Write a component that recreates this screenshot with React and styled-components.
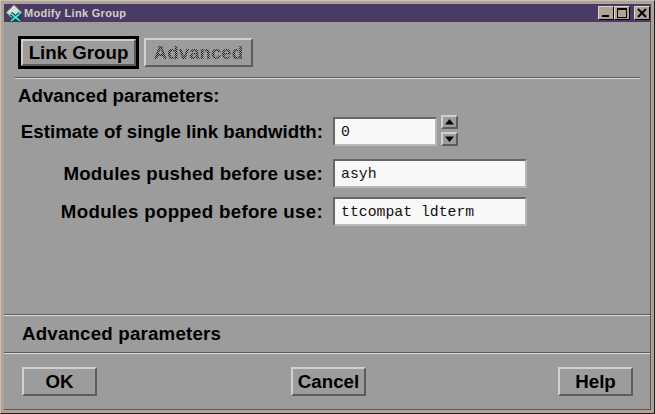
import React from "react";
import styled, { createGlobalStyle } from "styled-components";

const Global = createGlobalStyle`
  html, body { margin: 0; padding: 0; background: #9c9c9c; }
  #root { width: 655px; height: 414px; }
`;

const Frame = styled.div`
  box-sizing: border-box;
  width: 655px;
  height: 414px;
  display: flex;
  flex-direction: column;
  background: #9c9c9c;
  border-style: solid;
  border-width: 1px;
  border-color: #c8c0b8 #201c1c #201c1c #c8c0b8;
  font-family: "Liberation Sans", Arial, sans-serif;
  color: #000;
`;

const Inner = styled.div`
  flex: 1;
  min-height: 0;
  display: flex;
  flex-direction: column;
  border-style: solid;
  border-width: 3px;
  border-color: #b0a296;
`;

const TitleBar = styled.div`
  height: 18px;
  display: flex;
  align-items: center;
  background: #483c64;
  color: #d8d0c8;
  font-size: 11px;
  font-weight: 700;
  letter-spacing: 0.3px;
  padding: 0 1px 0 1px;
  gap: 1px;
`;

const TitleText = styled.span`
  flex: 1;
`;

const WinButton = styled.button`
  box-sizing: border-box;
  width: 16px;
  height: 14px;
  padding: 0;
  background: #b0a296;
  border-style: solid;
  border-width: 1px;
  border-color: #e0d8d0 #000 #000 #e0d8d0;
  display: flex;
  align-items: center;
  justify-content: center;
`;

const WinGroup = styled.div`
  display: flex;
  margin-right: ${p => p.$gap || 0}px;
`;

const Client = styled.div`
  flex: 1;
  min-height: 0;
  display: flex;
  flex-direction: column;
  border-right: 1px solid #5c5650;
  border-bottom: 1px solid #5c5650;
`;

const Tabs = styled.div`
  display: flex;
  align-items: center;
  gap: 5px;
  padding: 14px 0 0 14px;
  height: 33px;
`;

const Default = styled.div`
  border: 3px solid #000;
  display: flex;
`;

const Push = styled.button`
  box-sizing: border-box;
  background: #9c9c9c;
  border-style: solid;
  border-width: 2px;
  border-color: #d0d0d0 #5c5c5c #5c5c5c #d0d0d0;
  font-family: "Liberation Sans", Arial, sans-serif;
  font-weight: 700;
  font-size: 18.7px;
  color: #000;
  padding: 0;
  width: ${p => p.$w}px;
  height: ${p => p.$h}px;
  margin: 0;
`;

const Dim = styled.span`
  color: transparent;
  background-image: repeating-conic-gradient(#1c1c1c 0 25%, #9c9c9c 0 50%);
  background-size: 2px 2px;
  -webkit-background-clip: text;
  background-clip: text;
`;

const Rule = styled.div`
  height: 2px;
  margin: ${p => p.$m || "0"};
  background: linear-gradient(#5c5c5c 50%, #dcdcdc 50%);
`;

const Heading = styled.div`
  font-size: 18.7px;
  font-weight: 700;
  line-height: 18px;
  padding: 8px 0 0 14px;
`;

const Form = styled.div`
  flex: 1;
  min-height: 0;
  display: grid;
  grid-template-columns: 319px auto;
  grid-template-rows: 33px 29px 29px;
  row-gap: 9px;
  column-gap: 10px;
  align-items: start;
  justify-items: start;
  padding-top: 12px;
  align-content: start;
`;

const Label = styled.label`
  justify-self: end;
  font-size: 18.7px;
  font-weight: 700;
  line-height: 29px;
  letter-spacing: ${p => p.$track || 0}px;
  white-space: nowrap;
`;

const Field = styled.div`
  display: flex;
  align-items: center;
  gap: 4px;
`;

const Input = styled.input`
  box-sizing: border-box;
  width: ${p => p.$w}px;
  height: 29px;
  background: #f8f8f8;
  border-style: solid;
  border-width: 2px;
  border-color: #666 #b8b8b8 #b8b8b8 #666;
  outline: none;
  padding: 0 0 0 6px;
  font-family: "Liberation Mono", "DejaVu Sans Mono", monospace;
  font-size: 14.8px;
  color: #111;
`;

const Spin = styled.div`
  display: flex;
  flex-direction: column;
  gap: 3px;
  margin-top: -2px;
`;

const Arrow = styled.button`
  box-sizing: border-box;
  width: 17px;
  height: 14px;
  padding: 0;
  background: #9c9c9c;
  border-style: solid;
  border-width: 2px;
  border-color: #d0d0d0 #5c5c5c #5c5c5c #d0d0d0;
  display: flex;
  align-items: center;
  justify-content: center;
`;

const Status = styled.div`
  height: 36px;
  display: flex;
  align-items: center;
  padding-left: 18px;
  font-size: 18.7px;
  letter-spacing: 0.2px;
  font-weight: 700;
`;

const Actions = styled.div`
  display: grid;
  grid-template-columns: 269px 267px 75px;
  padding: 13px 0 0 18px;
  flex: 0 0 55px;
  box-sizing: border-box;
`;

const XLogo = styled.svg`
  flex: none;
  overflow: visible;
`;

export default function App() {
  return (
    <>
      <Global />
      <Frame>
        <Inner>
          <TitleBar>
            <XLogo width="18" height="18" viewBox="0 0 18 18">
              <path d="M9 0.5L17 8.5L9 16.5L1 8.5Z" fill="#d4d4d4" stroke="#555" strokeWidth="1" />
              <path d="M4 8L9 3M7 9L12 5M10 10L14 8" stroke="#f4f4f4" strokeWidth="1" fill="none" />
              <path d="M6 9.5L15 17M15 9.5L6 17" stroke="#102828" strokeWidth="3.6" fill="none" />
              <path d="M6 9.5L15 17M15 9.5L6 17" stroke="#30e8e8" strokeWidth="2" fill="none" />
            </XLogo>
            <TitleText>Modify Link Group</TitleText>
            <WinGroup $gap={3}>
              <WinButton aria-label="Minimize">
                <svg width="12" height="12" viewBox="0 0 12 12"><rect x="2" y="8" width="7" height="2" fill="#000" /></svg>
              </WinButton>
              <WinButton aria-label="Maximize">
                <svg width="12" height="12" viewBox="0 0 12 12"><rect x="1.5" y="1.5" width="9" height="9" fill="none" stroke="#000" /><rect x="1" y="1" width="10" height="2" fill="#000" /></svg>
              </WinButton>
            </WinGroup>
            <WinGroup>
              <WinButton aria-label="Close">
                <svg width="12" height="12" viewBox="0 0 12 12"><path d="M2 2L10 10M10 2L2 10" stroke="#000" strokeWidth="2" /></svg>
              </WinButton>
            </WinGroup>
          </TitleBar>
          <Client>
            <Tabs>
              <Default><Push $w={115} $h={27}>Link Group</Push></Default>
              <Push $w={109} $h={29}><Dim>Advanced</Dim></Push>
            </Tabs>
            <Rule $m="8px 10px 0 11px" />
            <Heading>Advanced parameters:</Heading>
            <Form>
              <Label>Estimate of single link bandwidth:</Label>
              <Field>
                <Input $w={104} defaultValue="0" />
                <Spin>
                  <Arrow aria-label="Up">
                    <svg width="9" height="6" viewBox="0 0 9 6"><path d="M4.5 0L9 5.5H0Z" fill="#000" /></svg>
                  </Arrow>
                  <Arrow aria-label="Down">
                    <svg width="9" height="6" viewBox="0 0 9 6"><path d="M0 .5H9L4.5 6Z" fill="#000" /></svg>
                  </Arrow>
                </Spin>
              </Field>
              <Label $track={0.24}>Modules pushed before use:</Label>
              <Input $w={194} defaultValue="asyh" />
              <Label $track={0.3}>Modules popped before use:</Label>
              <Input $w={194} defaultValue="ttcompat ldterm" />
            </Form>
            <Rule />
            <Status>Advanced parameters</Status>
            <Rule />
            <Actions>
              <Push $w={75} $h={29}>OK</Push>
              <Push $w={75} $h={29}>Cancel</Push>
              <Push $w={75} $h={29}>Help</Push>
            </Actions>
          </Client>
        </Inner>
      </Frame>
    </>
  );
}
